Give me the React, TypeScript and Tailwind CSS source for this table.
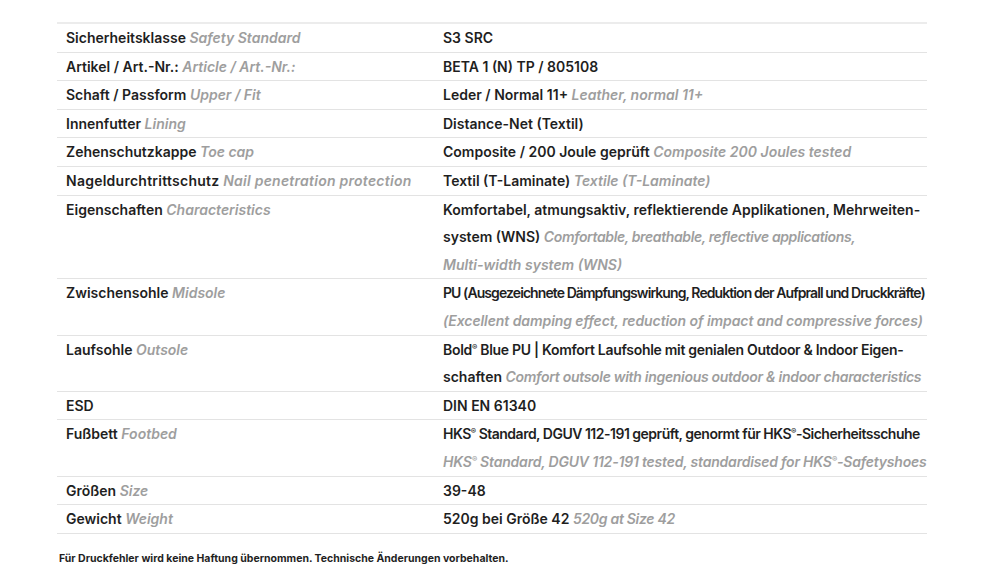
import type { ReactNode } from "react";

type Seg = { t: string; en?: boolean; cls?: string };

type Row = {
  de: string;
  en?: string;
  leftCls?: string;
  lines: Seg[][];
};

const ROWS: Row[] = [
  { de: "Sicherheitsklasse", en: "Safety Standard", lines: [[{ t: "S3 SRC" }]] },
  { de: "Artikel / Art.-Nr.:", en: "Article / Art.-Nr.:", lines: [[{ t: "BETA 1 (N) TP / 805108" }]] },
  {
    de: "Schaft / Passform",
    en: "Upper / Fit",
    lines: [[{ t: "Leder / Normal 11+ " }, { t: "Leather, normal 11+", en: true }]],
  },
  { de: "Innenfutter", en: "Lining", lines: [[{ t: "Distance-Net (Textil)" }]] },
  {
    de: "Zehenschutzkappe",
    en: "Toe cap",
    lines: [[{ t: "Composite / 200 Joule geprüft " }, { t: "Composite 200 Joules tested", en: true }]],
  },
  {
    de: "Nageldurchtrittschutz",
    en: "Nail penetration protection",
    leftCls: "tracking-[0.25px]",
    lines: [[{ t: "Textil (T-Laminate) " }, { t: "Textile (T-Laminate)", en: true }]],
  },
  {
    de: "Eigenschaften",
    en: "Characteristics",
    lines: [
      [{ t: "Komfortabel, atmungsaktiv, reflektierende Applikationen, Mehrweiten-" }],
      [
        { t: "system (WNS) " },
        { t: "Comfortable, breathable, reflective applications,", en: true, cls: "tracking-[-0.38px]" },
      ],
      [{ t: "Multi-width system (WNS)", en: true }],
    ],
  },
  {
    de: "Zwischensohle",
    en: "Midsole",
    lines: [
      [
        {
          t: "PU (Ausgezeichnete Dämpfungswirkung, Reduktion der Aufprall und Druckkräfte)",
          cls: "tracking-[-0.92px]",
        },
      ],
      [
        {
          t: "(Excellent damping effect, reduction of impact and compressive forces)",
          en: true,
          cls: "tracking-[-0.08px]",
        },
      ],
    ],
  },
  {
    de: "Laufsohle",
    en: "Outsole",
    lines: [
      [
        {
          t: "Bold® Blue PU | Komfort Laufsohle mit genialen Outdoor & Indoor Eigen-",
          cls: "tracking-[-0.3px]",
        },
      ],
      [
        { t: "schaften " },
        {
          t: "Comfort outsole with ingenious outdoor & indoor characteristics",
          en: true,
          cls: "tracking-[-0.3px]",
        },
      ],
    ],
  },
  { de: "ESD", lines: [[{ t: "DIN EN 61340" }]] },
  {
    de: "Fußbett",
    en: "Footbed",
    lines: [
      [
        {
          t: "HKS® Standard, DGUV 112-191 geprüft, genormt für HKS®-Sicherheitsschuhe",
          cls: "tracking-[-0.5px]",
        },
      ],
      [
        {
          t: "HKS® Standard, DGUV 112-191 tested, standardised for HKS®-Safetyshoes",
          en: true,
          cls: "tracking-[-0.2px]",
        },
      ],
    ],
  },
  { de: "Größen", en: "Size", lines: [[{ t: "39-48" }]] },
  {
    de: "Gewicht",
    en: "Weight",
    lines: [[{ t: "520g bei Größe 42 " }, { t: "520g at Size 42", en: true, cls: "tracking-[-0.3px]" }]],
  },
];

// small raised ® like the reference, kept out of the line box height
function withReg(text: string): ReactNode[] {
  return text.split("®").flatMap((part, i, arr) =>
    i < arr.length - 1
      ? [
          part,
          <span key={i} className="relative -top-[5px] text-[8px] leading-[0]">
            ®
          </span>,
        ]
      : [part],
  );
}

function En({ children, cls }: { children: string; cls?: string }) {
  return <span className={`italic text-[#9e9e9e] ${cls ?? ""}`}>{withReg(children)}</span>;
}

export default function App() {
  return (
    <div className="min-h-[564px] w-[985px] bg-white pt-[22px] font-['Inter',sans-serif] text-[#1f1f1f]">
      <div className="ml-[57px] w-[870px] border-t-2 border-[#ececec]">
        {ROWS.map((row) => (
          <div
            key={row.de}
            className="grid grid-cols-[377px_1fr] border-b border-[#e3e3e3] text-[14px] font-semibold leading-[27.6px]"
          >
            <div className={`whitespace-nowrap pl-[9px] ${row.leftCls ?? ""}`}>
              {row.de}
              {row.en && (
                <>
                  {" "}
                  <En>{row.en}</En>
                </>
              )}
            </div>
            <div className="pl-[9px]">
              {row.lines.map((line, i) => (
                <div key={i} className="whitespace-nowrap">
                  {line.map((seg, j) =>
                    seg.en ? (
                      <En key={j} cls={seg.cls}>
                        {seg.t}
                      </En>
                    ) : (
                      <span key={j} className={seg.cls ?? ""}>
                        {withReg(seg.t)}
                      </span>
                    ),
                  )}
                </div>
              ))}
            </div>
          </div>
        ))}
      </div>
      <p className="ml-[59px] mt-[17px] text-[10.5px] font-bold text-[#1f1f1f]">
        Für Druckfehler wird keine Haftung übernommen. Technische Änderungen vorbehalten.
      </p>
    </div>
  );
}
